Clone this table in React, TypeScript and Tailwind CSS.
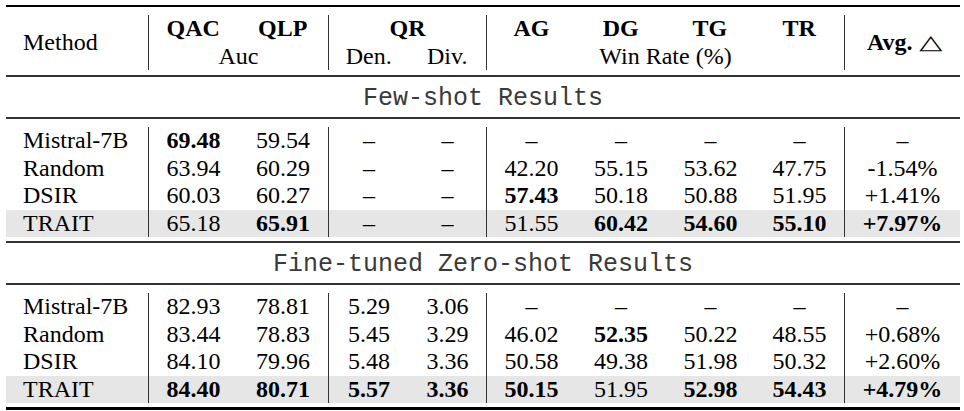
import React from 'react'

type Row = { m: string; v: string[]; b?: number[]; hl?: boolean }

const fewShot: Row[] = [
  { m: 'Mistral-7B', v: ['69.48', '59.54', '–', '–', '–', '–', '–', '–', '–'], b: [0] },
  { m: 'Random', v: ['63.94', '60.29', '–', '–', '42.20', '55.15', '53.62', '47.75', '-1.54%'] },
  { m: 'DSIR', v: ['60.03', '60.27', '–', '–', '57.43', '50.18', '50.88', '51.95', '+1.41%'], b: [4] },
  { m: 'TRAIT', v: ['65.18', '65.91', '–', '–', '51.55', '60.42', '54.60', '55.10', '+7.97%'], b: [1, 5, 6, 7, 8], hl: true },
]

const fineTuned: Row[] = [
  { m: 'Mistral-7B', v: ['82.93', '78.81', '5.29', '3.06', '–', '–', '–', '–', '–'] },
  { m: 'Random', v: ['83.44', '78.83', '5.45', '3.29', '46.02', '52.35', '50.22', '48.55', '+0.68%'], b: [5] },
  { m: 'DSIR', v: ['84.10', '79.96', '5.48', '3.36', '50.58', '49.38', '51.98', '50.32', '+2.60%'] },
  { m: 'TRAIT', v: ['84.40', '80.71', '5.57', '3.36', '50.15', '51.95', '52.98', '54.43', '+4.79%'], b: [0, 1, 2, 3, 4, 6, 7, 8], hl: true },
]

// widths of the nine value columns, with the group dividers baked in
const cellCls = [
  'w-[89px]',
  'w-[91px] border-r border-[#333]',
  'w-[80px]',
  'w-[78px] border-r border-[#333]',
  'w-[89px]',
  'w-[90px]',
  'w-[89px]',
  'w-[90px] border-r border-[#333]',
  'w-[115px]',
]

const Body = ({ rows }: { rows: Row[] }) => (
  <div className="pt-2 pb-[4px]">
    {rows.map((r) => (
      <div key={r.m} className={`flex h-[27.5px] leading-[27.5px] ${r.hl ? 'bg-[#e6e6e6]' : ''}`}>
        <div className="w-[143px] pl-[17px] border-r border-[#333]">{r.m}</div>
        {r.v.map((x, i) => (
          <div key={i} className={`${cellCls[i]} text-center ${r.b?.includes(i) ? 'font-bold' : ''}`}>
            {x}
          </div>
        ))}
      </div>
    ))}
  </div>
)

const Label = ({ text }: { text: string }) => (
  <div className="h-[40px] pt-[3px] flex items-center justify-center font-['Liberation_Mono',monospace] text-[25px] text-[#3a3a3a]">
    {text}
  </div>
)

export default function App() {
  return (
    <div className="bg-white w-[964px] h-[411px] overflow-hidden font-['Liberation_Serif',serif] text-[24px] text-black">
      <div className="ml-[6px] w-[954px] pt-[5px]">
        <div className="h-[2px] bg-black" />

        {/* header */}
        <div className="pt-2 pb-[5px] flex leading-[27.5px]">
          <div className="w-[143px] pl-[17px] border-r border-[#333] flex items-center">Method</div>
          <div className="w-[180px] border-r border-[#333]">
            <div className="flex font-bold">
              <div className="w-[89px] text-center">QAC</div>
              <div className="w-[91px] text-center">QLP</div>
            </div>
            <div className="text-center">Auc</div>
          </div>
          <div className="w-[158px] border-r border-[#333]">
            <div className="text-center font-bold">QR</div>
            <div className="flex">
              <div className="w-[80px] text-center">Den.</div>
              <div className="w-[78px] text-center">Div.</div>
            </div>
          </div>
          <div className="w-[358px] border-r border-[#333]">
            <div className="flex font-bold">
              <div className="w-[89px] text-center">AG</div>
              <div className="w-[90px] text-center">DG</div>
              <div className="w-[89px] text-center">TG</div>
              <div className="w-[90px] text-center">TR</div>
            </div>
            <div className="text-center">Win Rate (%)</div>
          </div>
          <div className="w-[115px] flex items-center justify-center">
            <span className="font-bold">Avg.</span>
            <span className="ml-[10px] font-['DejaVu_Sans',sans-serif] text-[20px] inline-block scale-x-150">△</span>
          </div>
        </div>
        <div className="h-[2px] bg-[#333]" />

        <Label text="Few-shot Results" />
        <div className="h-[2px] bg-[#333]" />
        <Body rows={fewShot} />
        <div className="h-[2px] bg-[#333]" />

        <Label text="Fine-tuned Zero-shot Results" />
        <div className="h-[2px] bg-[#333]" />
        <Body rows={fineTuned} />
        <div className="h-[3px] bg-black" />
      </div>
    </div>
  )
}
